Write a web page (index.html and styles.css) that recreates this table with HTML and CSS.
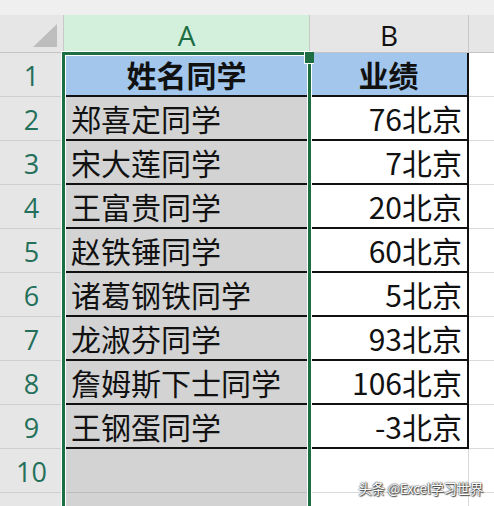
FILE: index.html
```html
<!DOCTYPE html>
<html lang="zh">
<head>
<meta charset="utf-8">
<link rel="stylesheet" href="styles.css">
</head>
<body>
<div class="sheet">
  <div class="topbar"></div>
  <div class="grid">
    <div class="corner"><svg class="tri" width="24" height="23" viewBox="0 0 24 23"><polygon points="24,0 24,23 0,23" fill="#bdbdbd"/></svg></div>
    <div class="colhead sel">A</div>
    <div class="colhead">B</div>
    <div class="colhead rest"></div>

    <div class="rowhead">1</div><div class="cell a hdr">姓名同学</div><div class="cell b hdr">业绩</div><div class="cell rest"></div>
    <div class="rowhead">2</div><div class="cell a">郑喜定同学</div><div class="cell b">76北京</div><div class="cell rest"></div>
    <div class="rowhead">3</div><div class="cell a">宋大莲同学</div><div class="cell b">7北京</div><div class="cell rest"></div>
    <div class="rowhead">4</div><div class="cell a">王富贵同学</div><div class="cell b">20北京</div><div class="cell rest"></div>
    <div class="rowhead">5</div><div class="cell a">赵铁锤同学</div><div class="cell b">60北京</div><div class="cell rest"></div>
    <div class="rowhead">6</div><div class="cell a">诸葛钢铁同学</div><div class="cell b">5北京</div><div class="cell rest"></div>
    <div class="rowhead">7</div><div class="cell a">龙淑芬同学</div><div class="cell b">93北京</div><div class="cell rest"></div>
    <div class="rowhead">8</div><div class="cell a">詹姆斯下士同学</div><div class="cell b">106北京</div><div class="cell rest"></div>
    <div class="rowhead">9</div><div class="cell a">王钢蛋同学</div><div class="cell b">-3北京</div><div class="cell rest"></div>
    <div class="rowhead">10</div><div class="cell a empty"></div><div class="cell b empty"></div><div class="cell rest"></div>
    <div class="rowhead"></div><div class="cell a empty"></div><div class="cell b empty"></div><div class="cell rest"></div>
  </div>
  <div class="selection"><span class="handle"></span></div>
  <div class="watermark">头条 @Excel学习世界</div>
</div>
</body>
</html>
```
FILE: styles.css
```css
html, body {
  margin: 0;
  padding: 0;
  background: #ffffff;
  overflow: hidden;
}
.sheet {
  position: relative;
  width: 494px;
  height: 506px;
  overflow: hidden;
  font-family: "Noto Sans CJK SC", "Noto Sans", sans-serif;
}
.topbar {
  height: 15px;
  background: #efefef;
}
.grid {
  display: grid;
  grid-template-columns: 64px 246px 159px 25px;
  grid-template-rows: 38px repeat(11, 44px);
}
.grid > div {
  box-sizing: border-box;
}
.corner {
  background: #e6e6e6;
  border-right: 1px solid #c9c9c9;
  border-bottom: 1px solid #c4c4c4;
  display: flex;
  align-items: flex-end;
  justify-content: flex-end;
  padding: 0 6px 5px 0;
}
.colhead {
  background: #e6e6e6;
  border-right: 1px solid #c9c9c9;
  border-bottom: 1px solid #c4c4c4;
  display: flex;
  align-items: center;
  justify-content: center;
  font-family: "Open Sans", "Noto Sans", sans-serif;
  font-size: 28px;
  color: #111;
  padding-top: 2px;
}
.colhead.sel {
  background: #d3f0dc;
  color: #1e6e44;
}
.colhead.rest {
  border-right: none;
}
.rowhead {
  background: #e6e6e6;
  border-right: 1px solid #cfcfcf;
  border-bottom: 1px solid #cfcfcf;
  display: flex;
  align-items: center;
  justify-content: center;
  font-family: "Open Sans", "Noto Sans", sans-serif;
  font-size: 27px;
  color: #24705a;
  padding-top: 1px;
}
.cell {
  border-right: 1px solid #dadada;
  border-bottom: 1px solid #dadada;
  display: flex;
  align-items: center;
  font-size: 30px;
  color: #111;
  white-space: nowrap;
}
.cell.a {
  background: #d3d3d3;
  border-bottom: 2px solid #111;
  padding-left: 7px;
}
.cell.b {
  background: #ffffff;
  border-bottom: 2px solid #111;
  border-right: 2px solid #111;
  justify-content: flex-end;
  padding-right: 5px;
}
.cell.hdr {
  background: #a2c6ec;
  font-weight: 700;
  justify-content: center;
  padding: 0;
}
.cell.a.empty {
  border-bottom: 1px solid #bdbdbd;
}
.cell.b.empty {
  border-bottom: 1px solid #dadada;
  border-right: 1px solid #dadada;
}
.cell.rest {
  border-right: none;
}
.selection {
  position: absolute;
  left: 62px;
  top: 52px;
  width: 249px;
  height: 480px;
  box-sizing: border-box;
  border: 3px solid #1e6e43;
  box-shadow: inset 0 0 0 1px #ffffff, 0 0 0 1px #ffffff;
}
.handle {
  position: absolute;
  right: -6px;
  top: -3px;
  width: 9px;
  height: 11px;
  background: #1e6e43;
  border-left: 1px solid #fff;
  border-bottom: 1px solid #fff;
}
.watermark {
  position: absolute;
  right: 11px;
  top: 478px;
  font-size: 13.5px;
  color: #ffffff;
  font-family: "Noto Sans CJK SC", "Noto Sans", sans-serif;
  text-shadow: 0 0 1px #333, 0 0 2px #333, 1px 1px 1px #555;
  letter-spacing: -0.3px;
}
```
